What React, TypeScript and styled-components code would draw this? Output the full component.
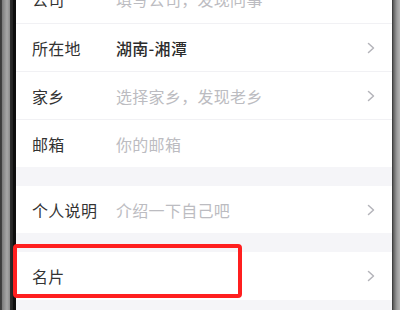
import React from "react";
import styled, { createGlobalStyle } from "styled-components";

const GlobalStyle = createGlobalStyle`
  html, body {
    margin: 0;
    padding: 0;
    background: #f5f5f8;
    overflow: hidden;
  }
  body {
    font-family: "Noto Sans CJK SC", "Noto Sans", sans-serif;
  }
`;

const Phone = styled.div`
  position: relative;
  display: flex;
  width: 400px;
  height: 310px;
  overflow: hidden;
`;

const LeftBezel = styled.div`
  width: 16px;
  flex-shrink: 0;
  background: linear-gradient(
    to right,
    #3a3a3a 0px,
    #444 2px,
    #7a7a7a 2px,
    #8e8e8e 4px,
    #a8a8a8 7px,
    #8a8a8a 10px,
    #2e2e2e 10px,
    #222 13px,
    #0e0e0e 13px,
    #0e0e0e 16px
  );
`;

const RightBezel = styled.div`
  width: 8px;
  flex-shrink: 0;
  background: linear-gradient(
    to right,
    #2a2a2a 0px,
    #555 1px,
    #7c7c7c 3px,
    #9c9c9c 5px,
    #b4b4b4 8px
  );
`;

const Screen = styled.div`
  flex: 1;
  display: flex;
  flex-direction: column;
  background: #f5f5f8;
`;

const Section = styled.div<{ $gap?: boolean; $clip?: boolean }>`
  display: flex;
  flex-direction: column;
  background: #fff;
  margin-top: ${(p) => (p.$clip ? "-25px" : p.$gap ? "19px" : "0")};
`;

const Row = styled.div<{ $divider?: boolean; $tall?: boolean }>`
  display: flex;
  align-items: center;
  height: ${(p) => (p.$tall ? "48px" : "47px")};
  padding: 0 17px 0 16px;
  border-bottom: ${(p) => (p.$divider ? "1px solid #f1f1f4" : "none")};
`;

const Label = styled.span`
  width: 84px;
  flex-shrink: 0;
  font-size: 16px;
  color: #333;
  letter-spacing: 0.3px;
`;

const Value = styled.span<{ $filled?: boolean }>`
  flex: 1;
  font-size: 16px;
  letter-spacing: 0.3px;
  color: ${(p) => (p.$filled ? "#2c2c2c" : "#bcbcc1")};
  font-weight: ${(p) => (p.$filled ? 500 : 400)};
`;

const Chevron = styled.svg`
  width: 8px;
  height: 12px;
  flex-shrink: 0;
`;

const Highlight = styled.div`
  position: absolute;
  left: 13px;
  top: 244px;
  width: 221px;
  height: 46px;
  border: 4px solid #ff1f1f;
  border-radius: 4px;
  pointer-events: none;
`;

const Arrow = () => (
  <Chevron viewBox="0 0 8 12">
    <polyline
      points="1.5,1.5 6.5,6 1.5,10.5"
      fill="none"
      stroke="#b4b4ba"
      strokeWidth="1.5"
      strokeLinecap="round"
      strokeLinejoin="round"
    />
  </Chevron>
);

type Item = { label: string; value?: string; filled?: boolean; arrow?: boolean };

const basic: Item[] = [
  { label: "公司", value: "填写公司，发现同事" },
  { label: "所在地", value: "湖南-湘潭", filled: true, arrow: true },
  { label: "家乡", value: "选择家乡，发现老乡", arrow: true },
  { label: "邮箱", value: "你的邮箱" },
];

function App() {
  return (
    <Phone>
      <GlobalStyle />
      <LeftBezel />
      <Screen>
        <Section $clip>
          {basic.map((item, i) => (
            <Row key={item.label} $divider={i < basic.length - 1} $tall={i === 0}>
              <Label>{item.label}</Label>
              <Value $filled={item.filled}>{item.value}</Value>
              {item.arrow && <Arrow />}
            </Row>
          ))}
        </Section>
        <Section $gap>
          <Row>
            <Label>个人说明</Label>
            <Value>介绍一下自己吧</Value>
            <Arrow />
          </Row>
        </Section>
        <Section $gap>
          <Row $tall>
            <Label>名片</Label>
            <Value />
            <Arrow />
          </Row>
        </Section>
      </Screen>
      <RightBezel />
      <Highlight />
    </Phone>
  );
}

export default App;
